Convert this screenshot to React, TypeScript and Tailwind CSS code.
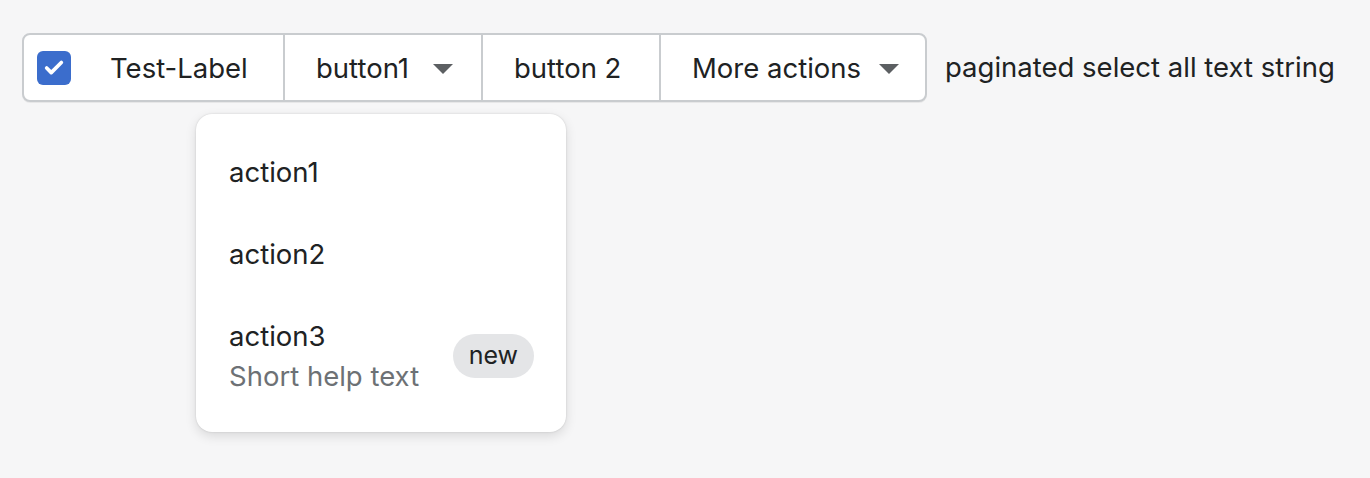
import { Check } from "lucide-react"

function Caret() {
  return (
    <svg width="20" height="10" viewBox="0 0 20 10" className="shrink-0">
      <path d="M0 0h20L10 10z" fill="#5c5f62" />
    </svg>
  )
}

export default function App() {
  return (
    <div
      className="min-h-[478px] w-[1370px] bg-[#f6f6f7] text-[#202223]"
      style={{ fontFamily: "Inter, 'Noto Sans', sans-serif" }}
    >
      <div className="flex items-center gap-[18px] pl-[22px] pt-[33px]">
        <div className="relative flex h-[69px] rounded-[8px] border-2 border-[#c9cccf] bg-white text-[27.5px] shadow-[0_1px_0_rgba(0,0,0,0.06)]">
          {/* checkbox + label */}
          <div className="flex w-[259px] items-center pl-[13px] pt-[2px]">
            <div className="-mt-[2px] flex h-[34px] w-[34px] items-center justify-center rounded-[6px] bg-[#3b6dcc]">
              <Check size={22} strokeWidth={4} color="white" />
            </div>
            <span className="ml-[39px]">Test-Label</span>
          </div>
          <div className="flex w-[198px] items-center gap-[24px] border-l-2 border-[#c9cccf] pl-[31px] pt-[2px]">
            <span>button1</span>
            <Caret />
          </div>
          <div className="flex w-[178px] items-center border-l-2 border-[#c9cccf] pl-[31px] pt-[2px]">
            <span>button 2</span>
          </div>
          <div className="flex w-[266px] items-center gap-[18px] border-l-2 border-[#c9cccf] pl-[31px] pt-[2px]">
            <span>More actions</span>
            <Caret />
          </div>

          {/* popover */}
          <div className="absolute left-[172px] top-[79px] w-[370px] rounded-[16px] bg-white pb-[36px] pt-[18px] shadow-[0_0_2px_rgba(0,0,0,0.15),0_4px_12px_rgba(0,0,0,0.12)]">
            <div className="flex h-[82px] items-center px-[33px]">action1</div>
            <div className="flex h-[82px] items-center px-[33px]">action2</div>
            <div className="flex items-center justify-between pl-[33px] pr-[32px] pt-[20px]">
              <div className="flex flex-col leading-[40px]">
                <span>action3</span>
                <span className="text-[#6d7175]">Short help text</span>
              </div>
              <span className="flex h-[44px] items-center rounded-full bg-[#e4e5e7] px-[16px] text-[25px]">new</span>
            </div>
          </div>
        </div>
        <span className="text-[27.5px]">paginated select all text string</span>
      </div>
    </div>
  )
}
